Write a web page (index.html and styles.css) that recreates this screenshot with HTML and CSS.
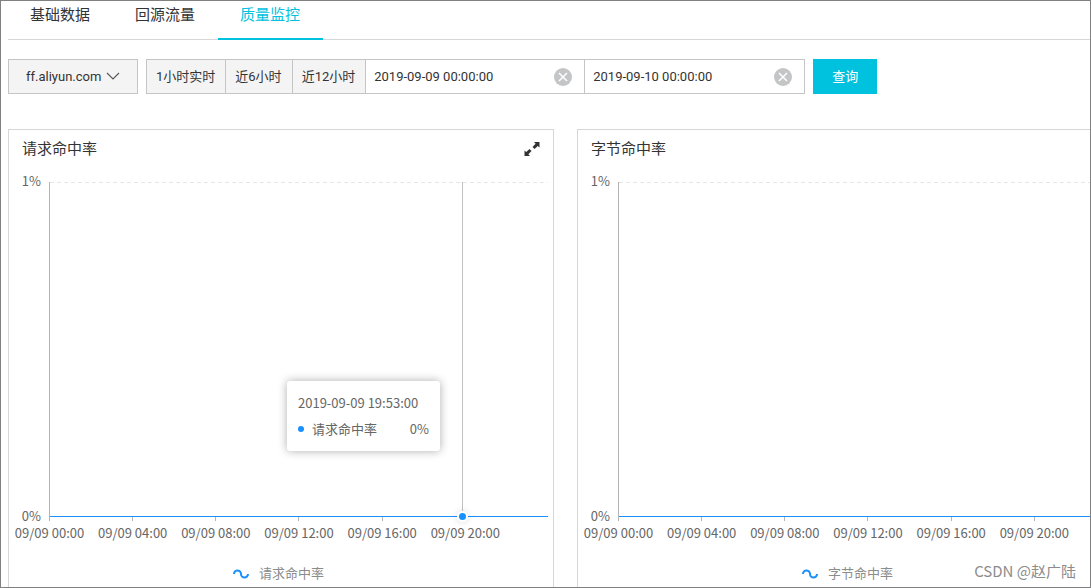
FILE: index.html
```html
<!DOCTYPE html>
<html lang="zh-CN">
<head>
<meta charset="utf-8">
<meta name="viewport" content="width=device-width, initial-scale=1">
<title>质量监控</title>
<link rel="stylesheet" href="styles.css">
</head>
<body>
<div class="page">
  <nav class="tabs">
    <button class="tab" type="button">基础数据</button>
    <button class="tab" type="button">回源流量</button>
    <button class="tab tab-active" type="button">质量监控</button>
  </nav>

  <form class="filters">
    <div class="domain">
      <select class="domain-select" aria-label="域名">
        <option>ff.aliyun.com</option>
      </select>
      <svg class="domain-arrow" width="14" height="8" viewBox="0 0 14 8" aria-hidden="true"><path d="M1 1L7 7L13 1" fill="none" stroke="#555" stroke-width="1.1"/></svg>
    </div>
    <div class="range">
      <button class="range-button" type="button">1小时实时</button>
      <button class="range-button" type="button">近6小时</button>
      <button class="range-button" type="button">近12小时</button>
      <div class="date">
        <input class="date-input" type="text" value="2019-09-09 00:00:00" aria-label="开始时间">
        <button class="clear" type="button" aria-label="清除开始时间"><svg width="18" height="18" viewBox="0 0 18 18"><circle cx="9" cy="9" r="9" fill="#c3c5c6"/><path d="M5 5L13 13M13 5L5 13" stroke="#fff" stroke-width="1.5"/></svg></button>
      </div>
      <div class="date">
        <input class="date-input" type="text" value="2019-09-10 00:00:00" aria-label="结束时间">
        <button class="clear" type="button" aria-label="清除结束时间"><svg width="18" height="18" viewBox="0 0 18 18"><circle cx="9" cy="9" r="9" fill="#c3c5c6"/><path d="M5 5L13 13M13 5L5 13" stroke="#fff" stroke-width="1.5"/></svg></button>
      </div>
    </div>
    <button class="query" type="button">查询</button>
  </form>

  <main class="cards">
    <section class="card">
      <header class="card-header">
        <h2 class="card-title">请求命中率</h2>
        <button class="expand" type="button" aria-label="放大"><svg width="16" height="16" viewBox="0 0 16 16"><path d="M10 1H15.500V6.500L13.800 4.900L10.500 8L8.500 6L11.600 2.700ZM0.500 9.500L2.200 11.100L5.500 8L7.500 10L4.400 13.300L6 15H0.500Z" fill="#333"/></svg></button>
      </header>
      <div class="chart">
        <div class="y-axis"><span>1%</span><span>0%</span></div>
        <div class="plot">
          <svg class="grid-line" width="100%" height="1"><line x1="0" y1="0.5" x2="100%" y2="0.5" stroke="#e6e6e6" stroke-dasharray="4 3"/></svg>
          <div class="cursor"><span class="cursor-dot"></span></div>
          <div class="tooltip">
            <div>2019-09-09 19:53:00</div>
            <div class="tooltip-row"><span class="dot"></span><span>请求命中率</span><span class="tooltip-value">0%</span></div>
          </div>
        </div>
        <div class="x-axis">
          <span class="tick">09/09 00:00</span><span class="tick">09/09 04:00</span><span class="tick">09/09 08:00</span><span class="tick">09/09 12:00</span><span class="tick">09/09 16:00</span><span class="tick">09/09 20:00</span>
        </div>
      </div>
      <div class="legend">
        <svg width="16" height="10" viewBox="0 0 16 10"><path d="M1 5A3.500 3.500 0 0 1 8 5A3.500 3.500 0 0 0 15 5" fill="none" stroke="#1890ff" stroke-width="2"/></svg>
        <span>请求命中率</span>
      </div>
    </section>

    <section class="card">
      <header class="card-header">
        <h2 class="card-title">字节命中率</h2>
      </header>
      <div class="chart">
        <div class="y-axis"><span>1%</span><span>0%</span></div>
        <div class="plot">
          <svg class="grid-line" width="100%" height="1"><line x1="0" y1="0.5" x2="100%" y2="0.5" stroke="#e6e6e6" stroke-dasharray="4 3"/></svg>
        </div>
        <div class="x-axis">
          <span class="tick">09/09 00:00</span><span class="tick">09/09 04:00</span><span class="tick">09/09 08:00</span><span class="tick">09/09 12:00</span><span class="tick">09/09 16:00</span><span class="tick">09/09 20:00</span>
        </div>
      </div>
      <div class="legend">
        <svg width="16" height="10" viewBox="0 0 16 10"><path d="M1 5A3.500 3.500 0 0 1 8 5A3.500 3.500 0 0 0 15 5" fill="none" stroke="#1890ff" stroke-width="2"/></svg>
        <span>字节命中率</span>
      </div>
    </section>
  </main>
  <div class="watermark">CSDN @赵广陆</div>
</div>
</body>
</html>
```
FILE: styles.css
```css
* { box-sizing: border-box; }

body {
  margin: 0;
  color: #333;
  background: #fff;
  font-family: Roboto, "Noto Sans CJK SC", sans-serif;
  font-size: 13px;
  line-height: 20px;
}

button, input, select {
  margin: 0;
  padding: 0;
  border: 0;
  border-radius: 0;
  color: inherit;
  background: none;
  font: inherit;
}

svg { display: block; }

.page {
  position: relative;
  height: 100vh;
  padding-left: 7px;
  border: 1px solid #808080;
  overflow: hidden;
}

.tabs {
  display: flex;
  height: 39px;
  border-bottom: 1px solid #d7d7d7;
}

.tab {
  height: 39px;
  padding: 0 23px 10px 22px;
  border-bottom: 2px solid transparent;
  font-size: 15px;
}

.tab-active {
  color: #00c1de;
  border-bottom-color: #00c1de;
}

.filters {
  display: flex;
  gap: 8px;
  margin-top: 19px;
}

.domain {
  position: relative;
  width: 130px;
}

.domain-select {
  width: 100%;
  height: 35px;
  padding-left: 17px;
  appearance: none;
  border: 1px solid #c3c5c6;
  background: #f4f4f4;
}

.domain-arrow {
  position: absolute;
  top: 13px;
  right: 18px;
  pointer-events: none;
}

.range { display: flex; }

.range-button {
  height: 35px;
  padding: 0 10px 0 9px;
  border: 1px solid #c3c5c6;
  border-right: 0;
  background: #f4f4f4;
}

.date {
  display: flex;
  align-items: center;
  width: 220px;
  height: 35px;
  padding: 0 12px 0 8px;
  border: 1px solid #c3c5c6;
}

.date + .date {
  border-left: 0;
}

.date-input {
  flex: 1;
  min-width: 0;
  outline: none;
}

.query {
  width: 64px;
  height: 35px;
  color: #fff;
  background: #00c1de;
}

.cards {
  display: grid;
  grid-template-columns: 1fr 1fr;
  gap: 23px;
  margin-top: 35px;
  margin-right: -33px;
}

.card {
  height: 480px;
  border: 1px solid #d7d7d7;
}

.card-header {
  display: flex;
  align-items: center;
  justify-content: space-between;
  height: 38px;
  padding: 0 13px;
}

.card-title {
  margin: 0;
  font-size: 15px;
  font-weight: 400;
}

.chart {
  display: grid;
  grid-template-columns: 40px 1fr;
  margin-top: 14px;
  padding-right: 5px;
  color: #666;
  font-family: "Noto Sans CJK SC", sans-serif;
}

.y-axis {
  display: flex;
  flex-direction: column;
  justify-content: space-between;
  margin: -11px 0 -9px;
  padding-right: 8px;
  text-align: right;
}

.plot {
  position: relative;
  height: 335px;
  border-left: 1px solid #b3b3b3;
}

.plot::after {
  content: "";
  position: absolute;
  right: 0;
  bottom: 0;
  left: 0;
  border-bottom: 1px solid #1890ff;
}

.x-axis {
  grid-column: 2;
  display: grid;
  grid-template-columns: repeat(6, 1fr);
}

.tick {
  display: flex;
  flex-direction: column;
  align-items: center;
  width: 81px;
  margin-left: -40px;
  white-space: nowrap;
}

.tick::before {
  content: "";
  height: 4px;
  margin-bottom: 2px;
  border-left: 1px solid #b3b3b3;
}

.cursor {
  position: absolute;
  top: 0;
  bottom: 0;
  left: 82.8%;
  border-left: 1px solid #c0c0c0;
}

.cursor-dot {
  position: absolute;
  z-index: 1;
  bottom: -5px;
  left: -6px;
  width: 11px;
  height: 11px;
  border: 2px solid #fff;
  border-radius: 50%;
  background: #1890ff;
  box-shadow: 0 0 6px rgba(0, 0, 0, 0.15);
}

.tooltip {
  position: absolute;
  top: 199px;
  right: 108px;
  width: 153px;
  padding: 12px 11px;
  border-radius: 3px;
  background: #fff;
  box-shadow: 0 0 10px #aeaeae;
}

.tooltip-row {
  display: flex;
  align-items: center;
  margin-top: 6px;
}

.dot {
  width: 6px;
  height: 6px;
  margin-right: 8px;
  border-radius: 50%;
  background: #1890ff;
}

.tooltip-value { margin-left: auto; }

.legend {
  display: flex;
  align-items: center;
  justify-content: center;
  gap: 10px;
  margin-top: 21px;
  padding-right: 5px;
  color: #8c8c8c;
}

.watermark {
  position: absolute;
  right: 14px;
  bottom: 6px;
  color: #8c8c8c;
  font-family: "Noto Sans CJK SC", sans-serif;
  font-size: 15px;
}
```
